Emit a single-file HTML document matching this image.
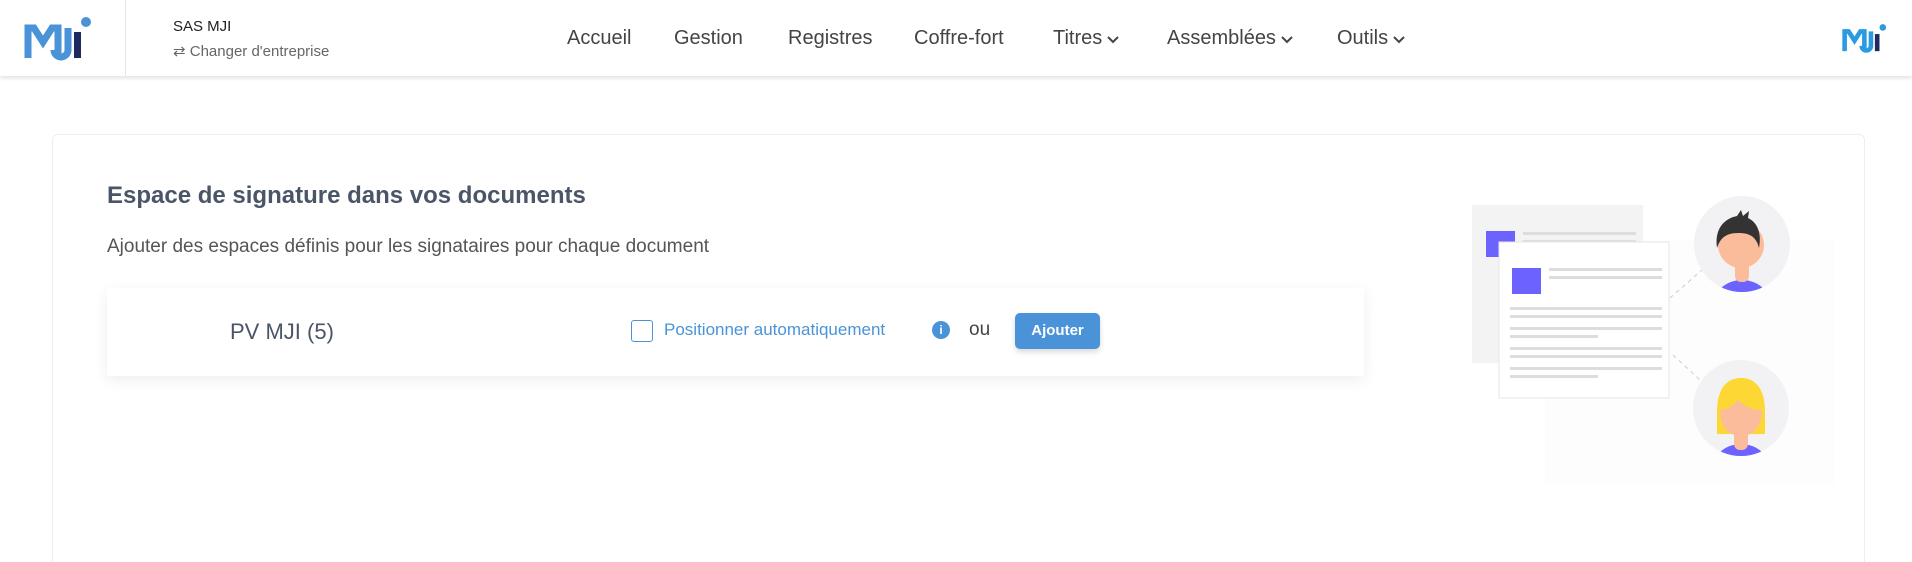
<!DOCTYPE html>
<html style="width:1912px;height:562px;overflow:hidden"><head><meta charset="utf-8"><style>
*{margin:0;padding:0;box-sizing:border-box}
body{width:1912px;height:562px;overflow:hidden;background:#fff;font-family:"Liberation Sans",sans-serif;position:relative}
.hdr{position:absolute;left:0;top:0;width:1912px;height:76px;background:#fff;box-shadow:0 2px 4px rgba(0,0,0,.12);z-index:2}
.div{position:absolute;left:125px;top:0;width:1px;height:76px;background:#e5e5e5}
.nav{position:absolute;top:26px;font-size:20px;color:#444;line-height:24px;white-space:nowrap}
.nav svg{display:inline-block;vertical-align:middle;margin-left:4px}
.card{position:absolute;left:52px;top:134px;width:1813px;height:428px;border:1px solid #eee;border-bottom:none;border-radius:6px 6px 0 0;background:#fff}
.abs{position:absolute}
.row{position:absolute;left:107px;top:288px;width:1257px;height:88px;background:#fff;box-shadow:0 4px 14px rgba(0,0,0,.07)}
</style></head><body>
<div class="hdr">
<svg class="abs" style="left:24px;top:14px" width="76" height="48" viewBox="0 0 76 48"><path d="M4 44V14h6l9 14 9-14h6v30" fill="none" stroke="#4a93d8" stroke-width="7"/><path d="M44 14v22a7 7 0 0 1-14 0" fill="none" stroke="#4a93d8" stroke-width="7"/><rect x="50" y="18" width="7" height="26" fill="#1f2a63"/><circle cx="62" cy="8" r="5" fill="#4a93d8"/></svg>
<div class="div"></div>
<div class="abs" style="left:173px;top:18px;font-size:15px;color:#222">SAS MJI</div>
<div class="abs" style="left:173px;top:42px;font-size:15px;color:#666">⇄ Changer d'entreprise</div>
<div class="nav" style="left:567px">Accueil</div>
<div class="nav" style="left:674px">Gestion</div>
<div class="nav" style="left:788px">Registres</div>
<div class="nav" style="left:914px">Coffre-fort</div>
<div class="nav" style="left:1053px">Titres<svg width="14" height="10" viewBox="0 0 14 10"><path d="M2 3l5 5 5-5" fill="none" stroke="#444" stroke-width="2"/></svg></div>
<div class="nav" style="left:1167px">Assemblées<svg width="14" height="10" viewBox="0 0 14 10"><path d="M2 3l5 5 5-5" fill="none" stroke="#444" stroke-width="2"/></svg></div>
<div class="nav" style="left:1337px">Outils<svg width="14" height="10" viewBox="0 0 14 10"><path d="M2 3l5 5 5-5" fill="none" stroke="#444" stroke-width="2"/></svg></div>
<svg class="abs" style="left:1842px;top:20px" width="50" height="36" viewBox="0 0 76 48"><path d="M4 44V14h6l9 14 9-14h6v30" fill="none" stroke="#2a9be0" stroke-width="7"/><path d="M44 14v22a7 7 0 0 1-14 0" fill="none" stroke="#2a9be0" stroke-width="7"/><rect x="50" y="18" width="7" height="26" fill="#1f2a63"/><circle cx="62" cy="8" r="5" fill="#2a9be0"/></svg>
</div>
<div class="card"></div>
<div class="abs" style="left:107px;top:182px;font-size:24px;color:#4a5568;font-weight:bold">Espace de signature dans vos documents</div>
<div class="abs" style="left:107px;top:236px;font-size:19px;color:#555">Ajouter des espaces définis pour les signataires pour chaque document</div>
<div class="row"></div>
<div class="abs" style="left:230px;top:319px;font-size:22px;color:#4a5568">PV MJI (5)</div>
<div class="abs" style="left:631px;top:320px;width:22px;height:22px;border:1.5px solid #4a93d8;border-radius:3px"></div>
<div class="abs" style="left:664px;top:320px;font-size:17px;color:#4a93d8">Positionner automatiquement</div>
<div class="abs" style="left:932px;top:321px;width:18px;height:18px;border-radius:50%;background:#4a93d8;color:#fff;font-size:12px;font-weight:bold;text-align:center;line-height:18px">i</div>
<div class="abs" style="left:969px;top:319px;font-size:19px;color:#444">ou</div>
<div class="abs" style="left:1015px;top:313px;width:85px;height:36px;background:#4a93d8;border-radius:5px;color:#fff;font-weight:bold;font-size:15px;text-align:center;line-height:36px;box-shadow:0 3px 6px rgba(0,0,0,.15)">Ajouter</div>
<svg class="abs" style="left:1400px;top:180px" width="460" height="320" viewBox="0 0 460 320">
<defs><clipPath id="c1"><circle cx="342" cy="64" r="48"/></clipPath><clipPath id="c2"><circle cx="341" cy="228" r="48"/></clipPath></defs>
<rect x="145" y="60" width="290" height="245" fill="#fdfdfe"/>
<rect x="72" y="25" width="171" height="158" fill="#f3f3f4"/>
<rect x="86" y="51" width="29" height="26" fill="#6c63ff"/>
<rect x="123" y="52" width="113" height="3" fill="#ddd"/><rect x="123" y="60" width="113" height="3" fill="#ddd"/>
<rect x="99" y="62" width="170" height="156" fill="#fff" stroke="#e6e6e6"/>
<rect x="112" y="88" width="29" height="26" fill="#6c63ff"/>
<rect x="149" y="88" width="113" height="3" fill="#ddd"/><rect x="149" y="96" width="113" height="3" fill="#ddd"/>
<rect x="110" y="127" width="152" height="3" fill="#ddd"/><rect x="110" y="135" width="152" height="3" fill="#ddd"/>
<rect x="110" y="147" width="152" height="3" fill="#ddd"/><rect x="110" y="155" width="88" height="3" fill="#ddd"/>
<rect x="110" y="167" width="152" height="3" fill="#ddd"/><rect x="110" y="175" width="152" height="3" fill="#ddd"/>
<rect x="110" y="187" width="152" height="3" fill="#ddd"/><rect x="110" y="195" width="88" height="3" fill="#ddd"/>
<path d="M270 118L302 90M273 175L300 200" stroke="#ccc" stroke-dasharray="4 4"/>
<circle cx="342" cy="64" r="48" fill="#f2f2f4"/><circle cx="341" cy="228" r="48" fill="#f2f2f4"/>
<g clip-path="url(#c1)">
<ellipse cx="342" cy="128" rx="30" ry="28" fill="#6c63ff"/>
<rect x="335" y="82" width="14" height="20" rx="6" fill="#fbbc9b"/>
<circle cx="341" cy="65" r="23" fill="#fbbc9b"/>
<path d="M317 68c-3-22 10-30 20-32l4-6 2 6 6-5-1 7c9 4 14 15 11 30-3-12-10-15-21-15-13 0-18 6-21 15z" fill="#333"/>
</g>
<g clip-path="url(#c2)">
<ellipse cx="341" cy="292" rx="30" ry="28" fill="#6c63ff"/>
<path d="M317 232c0-24 10-34 24-34s24 10 24 34v22h-48z" fill="#fdd835"/>
<rect x="334" y="248" width="14" height="22" rx="6" fill="#fbbc9b"/>
<path d="M320 230c8 0 14-6 18-10 6 6 14 10 24 10 0 16-8 26-21 26s-21-10-21-26z" fill="#fbbc9b"/>
</g>
</svg>
</body></html>
